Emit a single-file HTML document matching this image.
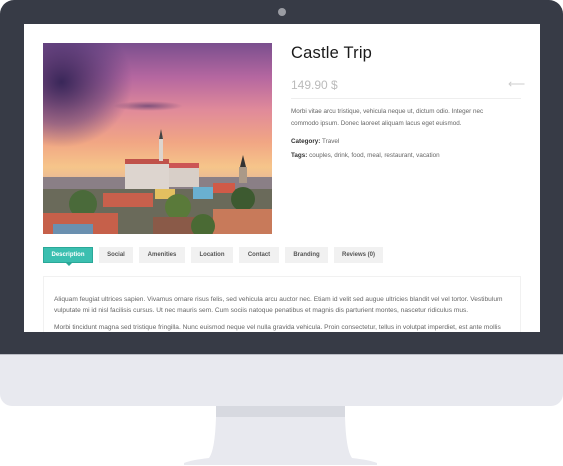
<!DOCTYPE html>
<html><head><meta charset="utf-8"><style>
*{margin:0;padding:0;box-sizing:border-box}
body{width:563px;height:466px;background:#fff;position:relative;overflow:hidden;font-family:"Liberation Sans",sans-serif}
.bezel{position:absolute;left:0;top:0;width:563px;height:354px;background:#373b46;border-radius:14px 14px 0 0}
.cam{position:absolute;left:278px;top:8px;width:8px;height:8px;border-radius:50%;background:#9a9ca3}
.screen{position:absolute;left:24px;top:24px;width:516px;height:308px;background:#fff;overflow:hidden}
.chin{position:absolute;left:0;top:354px;width:563px;height:52px;background:#e8e9ef;border-radius:0 0 12px 12px;border-top:1px solid #b9bbc3}
.band{position:absolute;left:216px;top:406px;width:129px;height:11px;background:#d7d9e0}
.img{position:absolute;left:19px;top:19px;width:229px;height:191px;overflow:hidden;
background:linear-gradient(180deg,#7a4f8e 0%,#b567a0 18%,#e08a9a 35%,#f1a684 52%,#f6c58a 65%,#e7b996 72%,#b9a9a8 78%)}
.title{position:absolute;left:267px;top:20px;font-size:16.5px;color:#1a1a1a;letter-spacing:.2px}
.price{position:absolute;left:267px;top:54px;font-size:12px;color:#bbb}
.arrow{position:absolute;left:484px;top:53px;font-size:12px;color:#ccc}
.hr{position:absolute;left:267px;top:74px;width:230px;height:1px;background:#eee}
.p{position:absolute;left:267px;font-size:6.3px;color:#666;line-height:12px}
.p b{color:#333;font-weight:bold}
.tab{position:absolute;top:223px;height:16px;background:#f1f1f1;font-size:6px;color:#555;font-weight:600;text-align:center;line-height:16px}
.tab.on{background:#3bbfb0;color:#fff;border:1px solid #2aa898;line-height:14px}
.tab.on:after{content:"";position:absolute;left:22px;bottom:-4px;border:3px solid transparent;border-top-color:#2aa898;border-bottom:0}
.box{position:absolute;left:19px;top:252px;width:478px;height:80px;border:1px solid #f1f1f1}
.t{position:absolute;left:30px;font-size:6.6px;color:#666;line-height:11px;width:458px}
</style></head><body>
<div class="bezel"><div class="cam"></div></div>
<div class="screen">
 <div class="img">
  <div style="position:absolute;left:-20px;top:-5px;width:110px;height:110px;background:radial-gradient(ellipse at 35% 40%,rgba(50,35,85,.95),rgba(80,55,115,.5) 45%,transparent 70%)"></div>
  <div style="position:absolute;left:70px;top:58px;width:70px;height:10px;background:radial-gradient(ellipse,rgba(90,60,110,.7),transparent 70%)"></div>
  <svg width="229" height="191" style="position:absolute;left:0;top:0">
   <rect x="0" y="134" width="229" height="57" fill="#8a7f86"/>
   <rect x="82" y="120" width="44" height="30" fill="#ddd5cf"/><rect x="82" y="116" width="44" height="5" fill="#c0524a"/>
   <rect x="116" y="94" width="4" height="24" fill="#ddd5cf"/><path d="M118 86 L116 96 L120 96Z" fill="#444"/>
   <rect x="126" y="124" width="30" height="20" fill="#d8cfc8"/><rect x="126" y="120" width="30" height="5" fill="#c55"/>
   <rect x="196" y="124" width="8" height="16" fill="#a98"/><path d="M200 112 L197 124 L203 124Z" fill="#333"/>
   <rect x="0" y="146" width="229" height="45" fill="#6a6a5a"/>
   <rect x="60" y="150" width="50" height="14" fill="#c8604c"/>
   <rect x="112" y="146" width="20" height="10" fill="#e3c060"/><rect x="150" y="144" width="20" height="12" fill="#6ab0d0"/>
   <rect x="170" y="140" width="22" height="10" fill="#d05a48"/>
   <circle cx="40" cy="161" r="14" fill="#4a6a3a"/><circle cx="135" cy="164" r="13" fill="#5a7a3a"/><circle cx="200" cy="156" r="12" fill="#3d5a30"/>
   <rect x="0" y="170" width="75" height="21" fill="#c6604a"/><rect x="110" y="174" width="60" height="17" fill="#8a5a48"/>
   <rect x="170" y="166" width="59" height="25" fill="#c87a5a"/><circle cx="160" cy="183" r="12" fill="#4a6a34"/>
   <rect x="10" y="181" width="40" height="10" fill="#6a90b0"/>
  </svg>
 </div>
 <div class="title">Castle Trip</div>
 <div class="price">149.90 $</div>
 <div class="arrow">⟵</div>
 <div class="hr"></div>
 <div class="p" style="top:82px">Morbi vitae arcu tristique, vehicula neque ut, dictum odio. Integer nec<br>commodo ipsum. Donec laoreet aliquam lacus eget euismod.</div>
 <div class="p" style="top:112px"><b>Category:</b> Travel</div>
 <div class="p" style="top:126px"><b>Tags:</b> couples, drink, food, meal, restaurant, vacation</div>
 <div class="tab on" style="left:19px;width:50px">Description</div>
 <div class="tab" style="left:75px;width:34px">Social</div>
 <div class="tab" style="left:115px;width:46px">Amenities</div>
 <div class="tab" style="left:167px;width:42px">Location</div>
 <div class="tab" style="left:215px;width:40px">Contact</div>
 <div class="tab" style="left:261px;width:43px">Branding</div>
 <div class="tab" style="left:310px;width:49px">Reviews (0)</div>
 <div class="box"></div>
 <div class="t" style="top:270px">Aliquam feugiat ultrices sapien. Vivamus ornare risus felis, sed vehicula arcu auctor nec. Etiam id velit sed augue ultricies blandit vel vel tortor. Vestibulum vulputate mi id nisl facilisis cursus. Ut nec mauris sem. Cum sociis natoque penatibus et magnis dis parturient montes, nascetur ridiculus mus.</div>
 <div class="t" style="top:298px">Morbi tincidunt magna sed tristique fringilla. Nunc euismod neque vel nulla gravida vehicula. Proin consectetur, tellus in volutpat imperdiet, est ante mollis</div>
</div>
<div class="chin"></div>
<svg width="563" height="466" style="position:absolute;left:0;top:0">
 <path d="M216 417 L345 417 Q346 450 352 458 Q370 460 377 463 L377 465 L184 465 L184 463 Q191 460 209 458 Q215 450 216 417Z" fill="#e8e9ef"/>
</svg>
<div class="band"></div>
</body></html>
